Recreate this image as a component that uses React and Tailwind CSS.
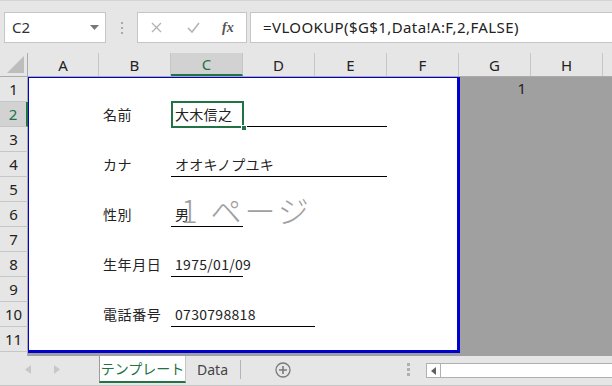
import React from 'react';

const ui = { fontFamily: '"Noto Sans", "Noto Sans CJK JP", sans-serif' };
const jp = { fontFamily: '"Noto Sans CJK JP", sans-serif' };

const columns = ['A', 'B', 'C', 'D', 'E', 'F', 'G', 'H', 'I'];
const colWidths = [71, 72, 72, 72, 72, 72, 72, 72, 30];

const formRows = [
    { row: 2, label: '名前', value: '大木信之', span: 'col-span-3' },
    { row: 4, label: 'カナ', value: 'オオキノプユキ', span: 'col-span-3' },
    { row: 6, label: '性別', value: '男', span: 'col-span-1' },
    { row: 8, label: '生年月日', value: '1975/01/09', span: 'col-span-1' },
    { row: 10, label: '電話番号', value: '0730798818', span: 'col-span-2' },
];

function Toolbar() {
    return (
        <div className="flex h-[53px] items-start gap-0 border-t border-[#d4d4d4] bg-[#e6e6e6] pt-[11px]">
            <div className="ml-[4px] flex h-[31px] w-[102px] items-center justify-between border border-[#c6c6c6] bg-white pl-[7px] pr-[6px]">
                <span className="text-[15px] text-[#333]" style={ui}>
                    C2
                </span>
                <svg width="9" height="5" viewBox="0 0 9 5">
                    <path d="M0 0h9L4.5 5z" fill="#777" />
                </svg>
            </div>
            <div className="flex h-[31px] w-[31px] flex-col items-center justify-center gap-[3px]">
                <span className="h-[2px] w-[2px] bg-[#a8a8a8]" />
                <span className="h-[2px] w-[2px] bg-[#a8a8a8]" />
                <span className="h-[2px] w-[2px] bg-[#a8a8a8]" />
            </div>
            <div className="flex h-[31px] w-[110px] items-center border border-[#c6c6c6] bg-white">
                <svg className="ml-[13px]" width="11" height="11" viewBox="0 0 11 11">
                    <path d="M1 1l9 9M10 1l-9 9" stroke="#b4b4b4" strokeWidth="1.4" />
                </svg>
                <svg className="ml-[25px]" width="13" height="11" viewBox="0 0 13 11">
                    <path d="M1 6l4 4 7-9" stroke="#b4b4b4" strokeWidth="1.6" fill="none" />
                </svg>
                <span
                    className="ml-[22px] text-[14px] font-bold italic text-[#555]"
                    style={{ fontFamily: '"Liberation Serif", serif' }}
                >
                    fx
                </span>
            </div>
            <div className="ml-[3px] flex h-[31px] flex-1 items-center border border-r-0 border-[#c6c6c6] bg-white pl-[12px]">
                <span className="text-[15px] tracking-[0.4px] text-[#222]" style={ui}>
                    =VLOOKUP($G$1,Data!A:F,2,FALSE)
                </span>
            </div>
        </div>
    );
}

function ColumnHeader() {
    return (
        <div className="flex h-[24px] border-b border-[#ababab] bg-[#e6e6e6]" style={ui}>
            <div className="relative w-[28px] shrink-0 border-r border-[#ababab]">
                <svg className="absolute bottom-[3px] right-[3px]" width="17" height="17" viewBox="0 0 17 17">
                    <path d="M17 0v17H0z" fill="#bdbdbd" />
                </svg>
            </div>
            {columns.map((c, i) => (
                <div
                    key={c}
                    className={
                        c === 'C'
                            ? 'flex shrink-0 items-center justify-center border-b-2 border-r border-b-[#217346] border-r-[#c6c6c6] bg-[#d2d2d2] pt-[2px] text-[15px] text-[#217346]'
                            : 'flex shrink-0 items-center justify-center border-r border-[#c6c6c6] pt-[2px] text-[15px] text-[#222]'
                    }
                    style={{ width: colWidths[i] }}
                >
                    {c !== 'I' && c}
                </div>
            ))}
        </div>
    );
}

function RowHeader() {
    const rows = Array.from({ length: 11 }, (_, i) => i + 1);
    return (
        <div className="flex w-[28px] shrink-0 flex-col bg-[#e6e6e6]" style={ui}>
            {rows.map((r) => (
                <div
                    key={r}
                    className={
                        r === 2
                            ? 'flex h-[25px] items-center justify-center border-b border-r-2 border-b-[#c6c6c6] border-r-[#217346] bg-[#d2d2d2] text-[15px] text-[#217346]'
                            : 'flex h-[25px] items-center justify-center border-b border-r border-b-[#c6c6c6] border-r-[#ababab] text-[15px] text-[#222]'
                    }
                >
                    {r}
                </div>
            ))}
            <div className="flex-1 border-r border-[#ababab]" />
        </div>
    );
}

function Page() {
    return (
        <div
            className="relative grid h-[276px] w-[432px] shrink-0 grid-cols-[70px_72px_72px_72px_72px_70px] grid-rows-[24px_repeat(9,25px)_24px] border-b-[3px] border-l border-r-[3px] border-t border-[#0000d0] bg-white"
            style={jp}
        >
            {formRows.map((f) => (
                <React.Fragment key={f.row}>
                    <div
                        className="col-start-2 flex items-end pb-[4px] pl-[4px] text-[14px] leading-[18px] tracking-[0.6px] text-[#222]"
                        style={{ gridRow: f.row }}
                    >
                        {f.label}
                    </div>
                    <div
                        className={`${f.span} col-start-3 flex items-end border-b border-black pb-[3px] pl-[4px] text-[14px] leading-[18px] tracking-[0.3px] text-[#222]`}
                        style={{ gridRow: f.row }}
                    >
                        {f.value}
                    </div>
                </React.Fragment>
            ))}

            {/* selected cell C2 */}
            <div className="pointer-events-none absolute left-[142px] top-[23px] h-[27px] w-[73px] border-2 border-[#217346]" />
            <div className="absolute left-[212px] top-[47px] h-[6px] w-[6px] border border-white bg-[#217346]" />

            {/* page watermark */}
            <div className="absolute left-[152px] top-[112px] whitespace-nowrap text-[31px] font-light leading-[40px] tracking-[3px] text-[#a0a0a0]">
                1 ページ
            </div>
        </div>
    );
}

function Sheet() {
    return (
        <div className="flex h-[279px]">
            <RowHeader />
            <div className="flex flex-1 items-start bg-[#a0a0a0]">
                <Page />
                <div className="flex flex-1" style={ui}>
                    <div className="flex h-[24px] w-[71px] items-end justify-end pb-[2px] pr-[5px] text-[15px] text-[#222]">
                        1
                    </div>
                </div>
            </div>
        </div>
    );
}

function SheetTabs() {
    return (
        <div className="flex h-[30px] items-start border-b border-[#c6c6c6] bg-[#e6e6e6]" style={ui}>
            <div className="flex h-[27px] w-[99px] items-center pl-[25px]">
                <svg width="6" height="9" viewBox="0 0 6 9">
                    <path d="M6 0v9L0 4.5z" fill="#c8c8c8" />
                </svg>
                <svg className="ml-[23px]" width="6" height="9" viewBox="0 0 6 9">
                    <path d="M0 0v9l6-4.5z" fill="#c8c8c8" />
                </svg>
            </div>
            <div
                className="flex h-[27px] w-[87px] items-center justify-center border-b-2 border-l border-r border-b-[#217346] border-l-[#9b9b9b] border-r-[#c6c6c6] bg-white text-[14px] text-[#217346]"
                style={jp}
            >
                テンプレート
            </div>
            <div className="flex h-[27px] w-[54px] items-center pl-[11px] text-[14px] text-[#444]">
                Data
            </div>
            <div className="mt-[4px] h-[19px] w-px bg-[#b4b4b4]" />
            <div className="flex h-[27px] w-[83px] items-center justify-center">
                <svg width="16" height="16" viewBox="0 0 16 16">
                    <circle cx="8" cy="8" r="7" stroke="#7a7a7a" strokeWidth="1.3" fill="none" />
                    <path d="M8 4v8M4 8h8" stroke="#7a7a7a" strokeWidth="1.6" />
                </svg>
            </div>
            <div className="flex-1" />
            <div className="flex h-[27px] w-[16px] flex-col items-center justify-center gap-[2px]">
                <span className="h-[3px] w-[3px] bg-[#b0b0b0]" />
                <span className="h-[3px] w-[3px] bg-[#b0b0b0]" />
                <span className="h-[3px] w-[3px] bg-[#b0b0b0]" />
            </div>
            <div className="mt-[7px] ml-[10px] flex h-[15px] w-[186px] border border-r-0 border-[#b0b0b0] bg-white">
                <div className="flex w-[14px] items-center justify-center border-r border-[#b0b0b0]">
                    <svg width="5" height="8" viewBox="0 0 5 8">
                        <path d="M5 0v8L0 4z" fill="#606060" />
                    </svg>
                </div>
            </div>
        </div>
    );
}

export default function App() {
    return (
        <div className="flex h-[386px] w-[612px] flex-col overflow-hidden bg-[#e6e6e6]">
            <Toolbar />
            <ColumnHeader />
            <Sheet />
            <SheetTabs />
        </div>
    );
}
